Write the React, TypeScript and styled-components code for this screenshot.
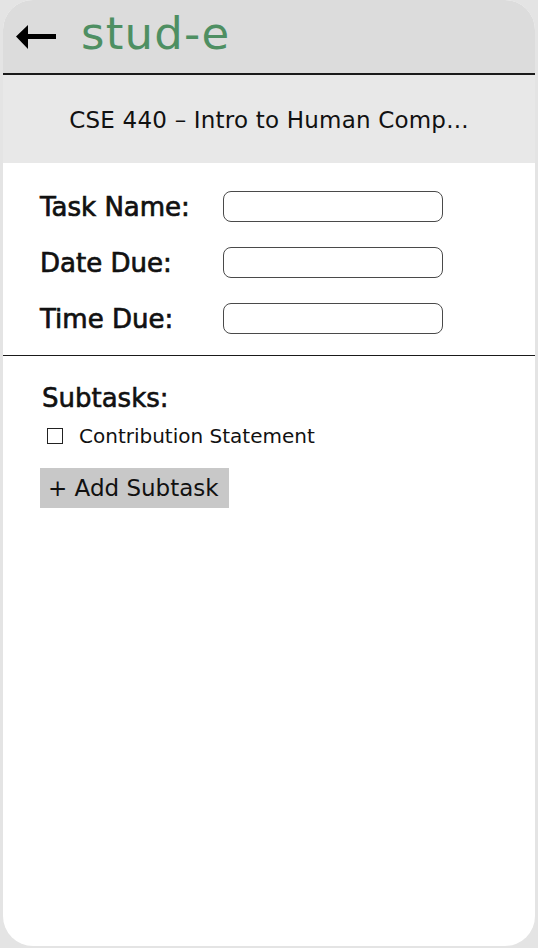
import styled, { createGlobalStyle } from "styled-components";

const GlobalStyle = createGlobalStyle`
  html, body {
    margin: 0;
    padding: 0;
    background: #e4e4e4;
  }
  body {
    font-family: "DejaVu Sans", "Open Sans", sans-serif;
    color: #111;
  }
`;

const fields = ["Task Name:", "Date Due:", "Time Due:"];

export default function App() {
  return (
    <>
      <GlobalStyle />
      <Screen>
        <Phone>
          <Header>
            <BackArrow width="41" height="26" viewBox="0 0 41 26">
              <path d="M0 11.5 L12 0 L12 9 L40 9 L40 14 L12 14 L12 24 Z" fill="#000" />
            </BackArrow>
            <Logo>stud-e</Logo>
          </Header>
          <CourseBar>CSE 440 – Intro to Human Comp...</CourseBar>
          <Form>
            {fields.map((f) => (
              <FieldRow key={f}>
                <Label>{f}</Label>
                <Field type="text" />
              </FieldRow>
            ))}
          </Form>
          <Subtasks>
            <SectionTitle>Subtasks:</SectionTitle>
            <SubtaskItem>
              <Check />
              <span>Contribution Statement</span>
            </SubtaskItem>
            <AddButton>+ Add Subtask</AddButton>
          </Subtasks>
        </Phone>
      </Screen>
    </>
  );
}

const Screen = styled.div`
  width: 538px;
  height: 948px;
  padding: 0 3px 2px 3px;
  box-sizing: border-box;
  background: #e4e4e4;
`;
const Phone = styled.div`
  display: flex;
  flex-direction: column;
  height: 100%;
  background: #fff;
  border-radius: 30px;
  overflow: hidden;
`;
const Header = styled.div`
  display: flex;
  align-items: center;
  gap: 24px;
  height: 75px;
  padding-left: 13px;
  box-sizing: border-box;
  background: #dcdcdc;
  border-bottom: 2px solid #1a1a1a;
`;
const BackArrow = styled.svg`
  display: block;
  margin-top: 2px;
`;
const Logo = styled.div`
  font-size: 45px;
  line-height: 1;
  letter-spacing: 1.2px;
  color: #4e8f62;
  margin-top: -7px;
`;
const CourseBar = styled.div`
  display: flex;
  align-items: center;
  justify-content: center;
  height: 88px;
  padding-top: 2px;
  box-sizing: border-box;
  background: #e8e8e8;
  font-size: 23px;
  line-height: 1;
  letter-spacing: 0.2px;
  color: #111;
`;
const Form = styled.div`
  display: flex;
  flex-direction: column;
  gap: 25px;
  padding: 28px 0 21px 37px;
  border-bottom: 1.5px solid #1a1a1a;
`;
const FieldRow = styled.div`
  display: flex;
  align-items: center;
  height: 31px;
`;
const Label = styled.div`
  width: 183px;
  font-size: 26px;
  line-height: 1;
  -webkit-text-stroke: 0.7px #111;
`;
const Field = styled.input`
  width: 220px;
  height: 31px;
  box-sizing: border-box;
  border: 1.5px solid #4a4a4a;
  border-radius: 8px;
  background: #fff;
`;
const Subtasks = styled.div`
  display: flex;
  flex-direction: column;
  align-items: flex-start;
  padding: 29px 0 0 37px;
`;
const SectionTitle = styled.div`
  font-size: 26px;
  line-height: 1;
  margin-left: 2px;
  -webkit-text-stroke: 0.6px #111;
`;
const SubtaskItem = styled.div`
  display: flex;
  align-items: center;
  gap: 16px;
  margin: 15px 0 0 7px;
  font-size: 20px;
  line-height: 1;
`;
const Check = styled.div`
  width: 16px;
  height: 16px;
  box-sizing: border-box;
  border: 1.5px solid #222;
`;
const AddButton = styled.button`
  margin-top: 22px;
  height: 40px;
  width: 189px;
  padding: 0 8px;
  border: none;
  background: #c8c8c8;
  font-family: "DejaVu Sans", "Open Sans", sans-serif;
  font-size: 23px;
  line-height: 1;
  white-space: nowrap;
  color: #111;
  text-align: left;
`;
